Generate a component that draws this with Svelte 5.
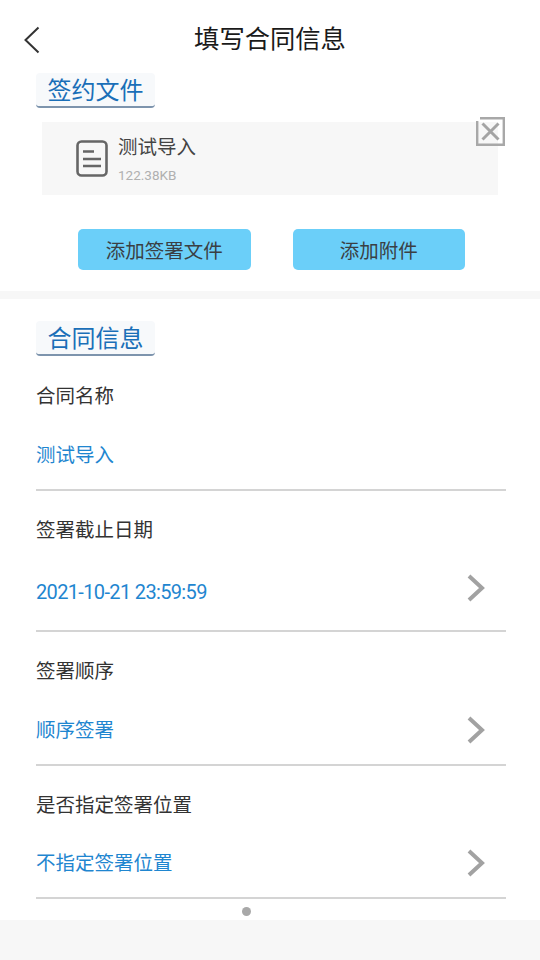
<script>
  const fields = [
    { label: '合同名称', value: '测试导入', arrow: false, labelHeight: 78, valueHeight: 42 },
    { label: '签署截止日期', value: '2021-10-21 23:59:59', arrow: true, raised: true, latin: true, labelHeight: 76, valueHeight: 50 },
    { label: '签署顺序', value: '顺序签署', arrow: true, labelHeight: 76, valueHeight: 43 },
    { label: '是否指定签署位置', value: '不指定签署位置', arrow: true, labelHeight: 76, valueHeight: 42 }
  ];
</script>

<div class="page">
  <header class="header">
    <svg class="back" width="18" height="28" viewBox="0 0 18 28" fill="none">
      <path d="M15.5 1.5 L2.5 14 L15.5 26.5" stroke="#333" stroke-width="2" />
    </svg>
    <h1>填写合同信息</h1>
  </header>

  <section class="files">
    <div class="section-title">签约文件</div>
    <div class="file-card">
      <svg class="file-icon" width="32" height="37" viewBox="0 0 32 37" fill="none">
        <rect x="1.5" y="1.5" width="29" height="34" rx="4" stroke="#666" stroke-width="2.6" />
        <path d="M7 11.5 H18 M7 19 H25 M7 26 H25" stroke="#666" stroke-width="2.4" />
      </svg>
      <div class="file-info">
        <div class="file-name">测试导入</div>
        <div class="file-size">122.38KB</div>
      </div>
      <svg class="file-close" width="29" height="29" viewBox="0 0 29 29" fill="none">
        <path d="M4 1.2 H27.8 V27.8 H1.2 V4" stroke="#a8a8a8" stroke-width="2.4" />
        <path d="M6.5 6.5 L22.5 22.5 M22.5 6.5 L6.5 22.5" stroke="#a4a4a4" stroke-width="3" />
      </svg>
    </div>
    <div class="actions">
      <button class="action">添加签署文件</button>
      <button class="action">添加附件</button>
    </div>
  </section>

  <section class="contract">
    <div class="section-title">合同信息</div>
    {#each fields as field}
      <div class="field">
        <div class="field-label" style="height: {field.labelHeight}px">{field.label}</div>
        <div class="field-value" class:latin={field.latin} style="height: {field.valueHeight}px">
          <span>{field.value}</span>
          {#if field.arrow}
            <svg class="arrow" class:raised={field.raised} width="18" height="28" viewBox="0 0 18 28" fill="none">
              <path d="M2 2 L15 14 L2 26" stroke="#a2a2a2" stroke-width="4" />
            </svg>
          {/if}
        </div>
      </div>
    {/each}
    <div class="pager"><span class="dot"></span></div>
  </section>
</div>

<style>
  :global(body) {
    margin: 0;
    background: #f7f7f7;
  }

  .page {
    width: 540px;
    height: 960px;
    overflow: hidden;
    background: #f7f7f7;
    font-family: "Noto Sans CJK SC", "Noto Sans", sans-serif;
  }

  .header {
    height: 73px;
    background: #fff;
    position: relative;
    display: flex;
    align-items: center;
    justify-content: center;
    padding-top: 3px;
    box-sizing: border-box;
  }

  .header h1 {
    margin: 0;
    font-size: 25.3px;
    font-weight: 400;
    color: #1a1a1a;
    line-height: 1;
  }

  .back {
    position: absolute;
    left: 23px;
    top: 26px;
  }

  .files {
    height: 218px;
    background: #fff;
    margin-bottom: 8px;
  }

  .section-title {
    width: 119px;
    height: 35px;
    margin-left: 36px;
    box-sizing: border-box;
    background: #f7f9fb;
    border-bottom: 2px solid #7d94ad;
    border-radius: 4px;
    text-align: center;
    font-size: 24px;
    line-height: 32px;
    color: #1a6fb8;
  }

  .file-card {
    position: relative;
    width: 456px;
    height: 73px;
    margin: 14px 0 0 42px;
    background: #f7f7f7;
    display: flex;
    align-items: flex-start;
  }

  .file-icon {
    margin: 18px 0 0 34px;
  }

  .file-info {
    margin-left: 10px;
  }

  .file-name {
    margin-top: 11px;
    font-size: 19.5px;
    line-height: 26px;
    color: #444;
  }

  .file-size {
    margin-top: 7px;
    font-family: Roboto, sans-serif;
    font-size: 13.5px;
    line-height: 18px;
    color: #b0b0b0;
  }

  .file-close {
    position: absolute;
    left: 434px;
    top: -5px;
  }

  .actions {
    display: flex;
    gap: 42px;
    margin: 34px 0 0 78px;
  }

  .action {
    width: 172.5px;
    height: 41px;
    padding: 0;
    border: none;
    border-radius: 5px;
    background: #6bcff9;
    font-family: inherit;
    font-size: 19.5px;
    color: #3a3f44;
  }

  .contract {
    height: 621px;
    background: #fff;
    padding-top: 22px;
    box-sizing: border-box;
  }

  .field {
    margin: 0 34px 0 36px;
    padding-bottom: 13px;
    border-bottom: 2px solid #d4d4d4;
  }

  .field-label {
    display: flex;
    align-items: center;
    box-sizing: border-box;
    padding-bottom: 2px;
    font-size: 19.5px;
    color: #333;
  }

  .field-value {
    display: flex;
    align-items: center;
    justify-content: space-between;
    padding-right: 21px;
    font-size: 19.5px;
    color: #1f86d0;
  }

  .field-value span {
    margin-bottom: 3px;
  }

  .field-value.latin {
    font-family: Roboto, sans-serif;
    font-size: 20px;
    letter-spacing: -0.65px;
  }

  .field-value.latin span {
    margin-bottom: 0;
  }

  .arrow.raised {
    margin-bottom: 8px;
  }

  .pager {
    display: flex;
    justify-content: center;
    padding: 8px 47px 0 0;
  }

  .dot {
    width: 9px;
    height: 9px;
    border-radius: 50%;
    background: #a8a8a8;
  }
</style>
